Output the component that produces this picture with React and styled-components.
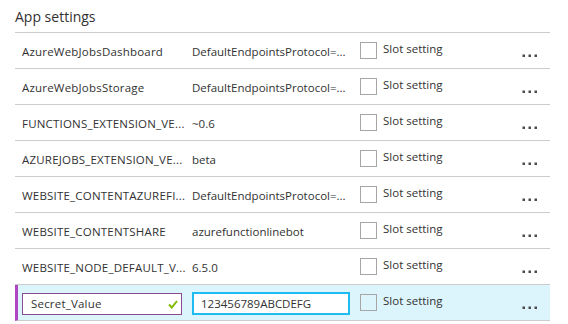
import React from "react";
import styled, { createGlobalStyle } from "styled-components";

const Global = createGlobalStyle`
  html, body { margin: 0; padding: 0; background: #ffffff; }
  body { font-family: "Open Sans", "Noto Sans", sans-serif; color: #323232; }
`;

const Panel = styled.div`
  width: 535px;
  padding-left: 15px;
  display: flex;
  flex-direction: column;
`;

const Title = styled.div`
  height: 33px;
  display: flex;
  align-items: center;
  padding-top: 1px;
  box-sizing: border-box;
  font-size: 14px;
  color: #323232;
  border-bottom: 1px solid #cccccc;
`;

const Row = styled.div`
  height: 36px;
  box-sizing: border-box;
  display: flex;
  align-items: center;
  padding-left: ${(p) => (p.$active ? "4px" : "7px")};
  border-bottom: 1px solid #cccccc;
  background: ${(p) => (p.$active ? "#dcf4fc" : "transparent")};
  border-left: ${(p) => (p.$active ? "3px solid #b146c2" : "none")};
  font-size: 11.5px;
`;

const NameCell = styled.div`
  width: 170px;
  flex: none;
  white-space: nowrap;
  overflow: hidden;
  padding-top: 2px;
  letter-spacing: 0.2px;
`;

const ValueCell = styled.div`
  width: 168px;
  flex: none;
  white-space: nowrap;
  overflow: hidden;
  padding-top: 2px;
`;

const SlotCell = styled.label`
  flex: 1;
  display: flex;
  align-items: center;
  gap: 6px;
  color: #323232;
  padding-bottom: 1px;
`;

const Box = styled.span`
  width: 17px;
  height: 17px;
  box-sizing: border-box;
  border: 1px solid #a6a6a6;
  background: ${(p) => (p.$active ? "transparent" : "#ffffff")};
  flex: none;
`;

const SlotText = styled.span`
  margin-top: -3px;
`;

const More = styled.div`
  width: 16px;
  flex: none;
  margin-right: 12px;
  display: flex;
  align-items: center;
  padding-top: 10px;
`;

const InputWrap = styled.div`
  position: relative;
  width: 160px;
  height: 22px;
  box-sizing: border-box;
  border: 1px solid #8a4a93;
  background: #ffffff;
  display: flex;
  align-items: center;
  padding-left: 8px;
  font-size: 11.5px;
`;

const ValueInput = styled.div`
  width: 158px;
  height: 23px;
  box-sizing: border-box;
  border: 2px solid #1fbcf2;
  background: #ffffff;
  display: flex;
  align-items: center;
  padding-left: 7px;
  font-size: 11.5px;
`;

const Check = styled.svg`
  position: absolute;
  right: 3px;
  top: 6px;
`;

const Dots = () => (
  <svg width="16" height="4" viewBox="0 0 16 4">
    <rect x="0.5" y="0.5" width="2.5" height="2.5" fill="#4a4a4a" />
    <rect x="6.5" y="0.5" width="2.5" height="2.5" fill="#4a4a4a" />
    <rect x="12.5" y="0.5" width="2.5" height="2.5" fill="#4a4a4a" />
  </svg>
);

const rows = [
  ["AzureWebJobsDashboard", "DefaultEndpointsProtocol=..."],
  ["AzureWebJobsStorage", "DefaultEndpointsProtocol=..."],
  ["FUNCTIONS_EXTENSION_VE...", "~0.6"],
  ["AZUREJOBS_EXTENSION_VE...", "beta"],
  ["WEBSITE_CONTENTAZUREFI...", "DefaultEndpointsProtocol=..."],
  ["WEBSITE_CONTENTSHARE", "azurefunctionlinebot"],
  ["WEBSITE_NODE_DEFAULT_V...", "6.5.0"],
];

const Slot = ({ active }) => (
  <SlotCell>
    <Box $active={active} />
    <SlotText>Slot setting</SlotText>
  </SlotCell>
);

export default function App() {
  return (
    <>
      <Global />
      <Panel>
        <Title>App settings</Title>
        {rows.map(([n, v]) => (
          <Row key={n}>
            <NameCell>{n}</NameCell>
            <ValueCell>{v}</ValueCell>
            <Slot />
            <More>
              <Dots />
            </More>
          </Row>
        ))}
        <Row $active>
          <NameCell>
            <InputWrap>
              Secret_Value
              <Check width="10" height="9" viewBox="0 0 10 9">
                <polyline points="1,4.5 3.8,7.5 9,1" fill="none" stroke="#7fba00" strokeWidth="2" />
              </Check>
            </InputWrap>
          </NameCell>
          <ValueCell>
            <ValueInput>123456789ABCDEFG</ValueInput>
          </ValueCell>
          <Slot active />
          <More>
            <Dots />
          </More>
        </Row>
      </Panel>
    </>
  );
}
